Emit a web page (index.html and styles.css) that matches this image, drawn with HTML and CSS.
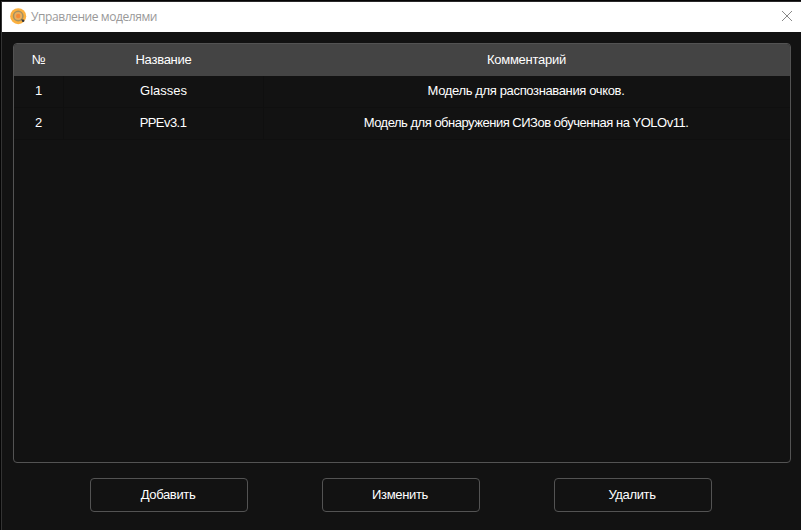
FILE: index.html
```html
<!DOCTYPE html>
<html lang="ru">
<head>
<meta charset="utf-8">
<title>Управление моделями</title>
<link rel="stylesheet" href="styles.css">
</head>
<body>
<div class="window">
  <header class="titlebar">
    <svg class="app-icon" width="17" height="17" viewBox="0 0 17 17">
      <circle cx="8.2" cy="8.2" r="8" fill="#fbb03f"/>
      <circle cx="8.2" cy="8" r="4.7" fill="#e9ad5c" stroke="#a39163" stroke-width="1.5"/>
      <circle cx="8.2" cy="8" r="2.2" fill="#f58a35"/>
      <path d="M11.3 11.2l1.7 1.6" stroke="#6f6a58" stroke-width="1.3"/>
      <circle cx="13.1" cy="12.8" r="1.3" fill="#37383a"/>
    </svg>
    <span class="title">Управление моделями</span>
    <svg class="close" width="12" height="12" viewBox="0 0 12 12">
      <path d="M1 1l10 10M11 1l-10 10" stroke="#888" stroke-width="1"/>
    </svg>
  </header>
  <main class="content">
    <div class="table">
      <div class="row head"><span>№</span><span>Название</span><span>Комментарий</span></div>
      <div class="row"><span>1</span><span>Glasses</span><span class="note-short">Модель для распознавания очков.</span></div>
      <div class="row"><span>2</span><span class="model-code">PPEv3.1</span><span class="note-long">Модель для обнаружения СИЗов обученная на YOLOv11.</span></div>
    </div>
    <div class="actions">
      <button>Добавить</button>
      <button>Изменить</button>
      <button>Удалить</button>
    </div>
  </main>
</div>
</body>
</html>
```
FILE: styles.css
```css
* { box-sizing: border-box; }
body { margin: 0; background: #050505; }
.window {
  width: 801px;
  height: 530px;
  padding-top: 1px;
  padding-left: 1px;
  overflow: hidden;
}
.titlebar {
  display: flex;
  align-items: center;
  height: 31px;
  padding: 0 8px 0 8px;
  background: #fff;
  border-top: 1px solid #2b292b;
  border-left: 1px solid #333;
}
.app-icon { margin-top: -1px; }
.title {
  margin-left: 4px;
  font: 12px/16px "Open Sans", "Noto Sans", sans-serif;
  letter-spacing: -0.42px;
  color: #999;
  white-space: nowrap;
}
.close { margin-left: auto; margin-top: -2px; }
.content {
  height: 498px;
  padding: 11px 10px 0 11px;
  background: #121212;
  border-left: 1px solid #333;
  font: 13px/16px "Liberation Sans", Arial, sans-serif;
  color: #fff;
}
.table {
  height: 420px;
  border: 1px solid #535353;
  border-radius: 4px;
  overflow: hidden;
}
.row {
  display: grid;
  grid-template-columns: 50px 200px 1fr;
  height: 32px;
  text-align: center;
  line-height: 30px;
  white-space: nowrap;
}
.row span { border-right: 1px solid #0f0f0f; border-bottom: 1px solid #0f0f0f; }
.row span:last-child { border-right: 0; padding-right: 2px; }
.head { background: #444; line-height: 32px; letter-spacing: -0.26px; }
.row.head span { border: 0; padding-right: 1px; }
.row .model-code { letter-spacing: -0.55px; padding-right: 1px; }
.row .note-short { letter-spacing: -0.36px; }
.row .note-long { letter-spacing: -0.49px; }
.actions {
  display: flex;
  justify-content: space-between;
  padding: 15px 79px 0 77px;
}
button {
  width: 158px;
  height: 34px;
  padding: 0 2px 0 0;
  border: 1px solid #535353;
  border-radius: 4px;
  background: transparent;
  color: inherit;
  font: inherit;
  letter-spacing: -0.35px;
}
```
